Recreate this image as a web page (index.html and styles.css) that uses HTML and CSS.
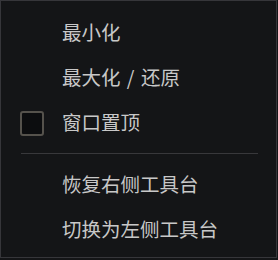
FILE: index.html
```html
<!DOCTYPE html>
<html lang="zh-CN">
<head>
<meta charset="utf-8">
<link rel="stylesheet" href="styles.css">
</head>
<body>
<div class="menu">
  <div class="item"><span class="slot"></span><span class="label">最小化</span></div>
  <div class="item"><span class="slot"></span><span class="label">最大化 / 还原</span></div>
  <div class="item"><span class="slot"><span class="check"></span></span><span class="label">窗口置顶</span></div>
  <div class="sep"></div>
  <div class="item"><span class="slot"></span><span class="label">恢复右侧工具台</span></div>
  <div class="item"><span class="slot"></span><span class="label">切换为左侧工具台</span></div>
</div>
</body>
</html>
```
FILE: styles.css
```css
html, body {
  margin: 0;
  padding: 0;
  background: #141517;
}
.menu {
  box-sizing: border-box;
  width: 277px;
  height: 258px;
  border: 1px solid #36363a;
  background: #141517;
  padding: 9px 0 5px 0;
  font-family: "Noto Sans CJK SC", "Noto Sans", sans-serif;
  font-size: 19.5px;
  color: #c8c8c8;
}
.item {
  display: flex;
  align-items: center;
  height: 45px;
  padding-left: 19px;
  gap: 18px;
}
.slot {
  width: 24px;
  height: 24px;
  display: flex;
}
.check {
  box-sizing: border-box;
  width: 24px;
  height: 25px;
  border: 2px solid #55524c;
  border-radius: 3px;
  background: #0c0d0f;
}
.label {
  line-height: 1;
  white-space: nowrap;
  word-spacing: 2px;
  padding-bottom: 2px;
}
.sep {
  height: 1px;
  background: #38383b;
  margin: 8px 18px 8px 20px;
}
```
